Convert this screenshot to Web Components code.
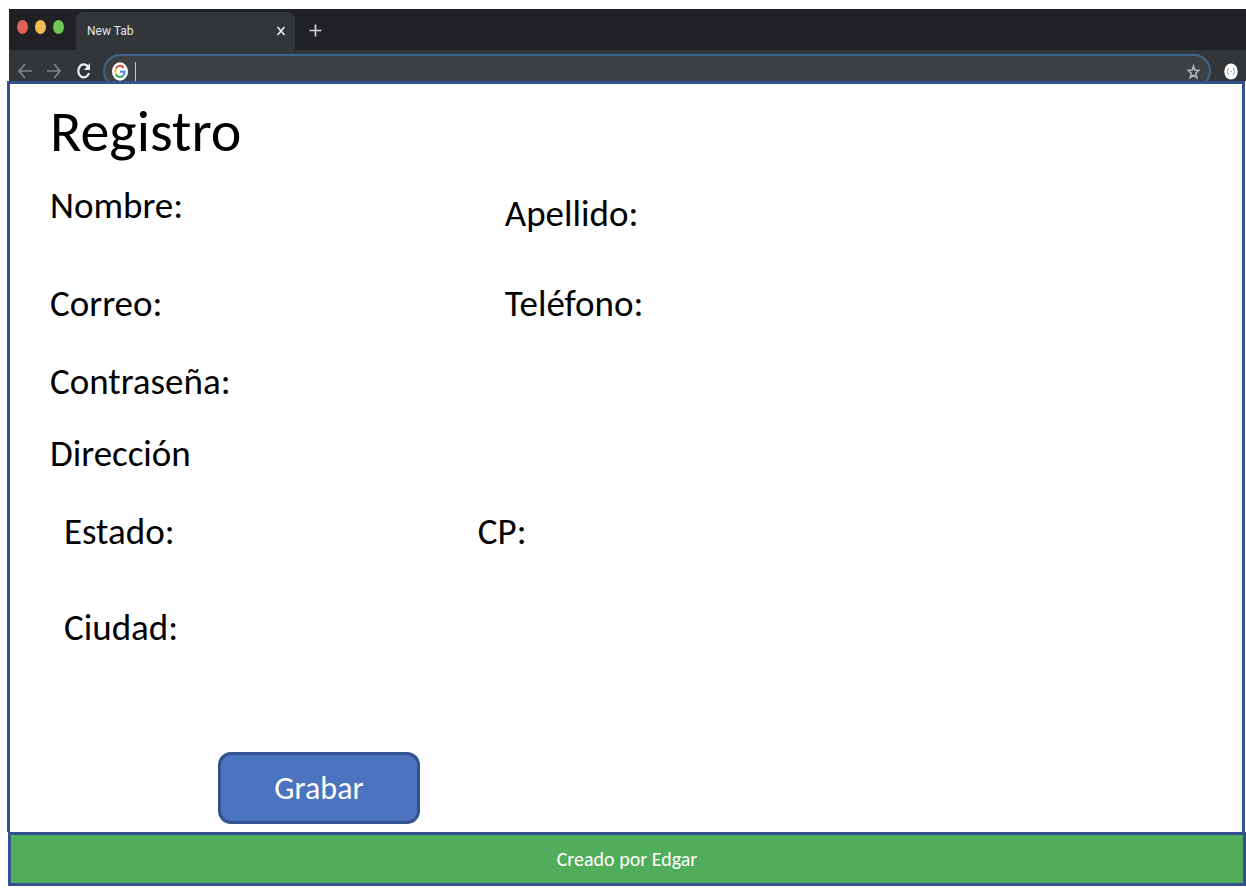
<!DOCTYPE html>
<html lang="es">
<head>
<meta charset="utf-8">
<meta name="viewport" content="width=device-width, initial-scale=1">
<title>Registro</title>
<style>
  body { margin: 0; background: #fff; color: #000; font-family: Carlito, Lato, "Open Sans", sans-serif; }
</style>
</head>
<body>
<app-window>
  <browser-chrome slot="chrome" label="New Tab"></browser-chrome>
  <registration-form></registration-form>
  <page-footer slot="footer">Creado por Edgar</page-footer>
</app-window>

<script>
const define = (name, html, setup) => {
  const template = document.createElement('template');
  template.innerHTML = html;
  customElements.define(name, class extends HTMLElement {
    constructor() {
      super();
      this.attachShadow({ mode: 'open' }).append(template.content.cloneNode(true));
    }
    connectedCallback() { if (setup) setup(this, this.shadowRoot); }
  });
};

define('browser-chrome', `
<style>
  :host { display: block; height: 72px; overflow: hidden; background: #323639; box-sizing: border-box; }
  .tabs { display: flex; align-items: flex-end; height: 41px; background: #202124; }
  .lights { display: flex; gap: 7px; padding: 0 12px 16px 8px; }
  .lights i { width: 11px; height: 14px; border-radius: 50%; background: #e0605a; }
  .lights i:nth-child(2) { background: #efbe50; }
  .lights i:nth-child(3) { background: #72c854; }
  .tab { display: flex; align-items: center; justify-content: space-between; box-sizing: border-box;
         width: 219px; height: 38px; padding: 0 8px 0 11px; border-radius: 8px 8px 0 0; background: #323639;
         color: #e4e6e8; font: 12px/16px Roboto, sans-serif; }
  button { display: flex; padding: 0; border: 0; background: none; color: inherit; }
  svg { display: block; fill: none; stroke: currentColor; }
  .new { margin: 0 0 13px 14px; color: #d4d5d7; }
  .bar { display: flex; align-items: flex-start; padding-top: 4px; color: #808488; }
  .nav { display: flex; gap: 12px; padding: 8px 11px 0 8px; }
  .reload { color: #f0f1f2; }
  .omni { display: flex; flex: 1; min-width: 0; align-items: center; height: 34px; box-sizing: border-box; padding: 0 8px 0 7px;
          border: 2px solid #3d668c; border-radius: 17px; background: #3c4043; color: #b5b8ba; }
  .omni input { flex: 1; min-width: 0; border: 0; border-left: 1px solid #c4c6c8; height: 19px; padding: 0; margin-left: 7px; background: none; outline: 0; color: #fff; }
  .ext { padding: 9px 8px 0 13px; }
</style>
<div class="tabs">
  <div class="lights"><i></i><i></i><i></i></div>
  <div class="tab"><span></span>
    <button aria-label="Cerrar"><svg width="12" height="12" stroke-width="1.7"><path d="M2.500 2l7 8M9.500 2l-7 8"/></svg></button>
  </div>
  <button class="new" aria-label="Nueva"><svg width="13" height="13" stroke-width="1.7"><path d="M6.500 .5v12M.5 6.500h12"/></svg></button>
</div>
<div class="bar">
  <div class="nav">
    <button aria-label="Atrás"><svg width="17" height="18" stroke-width="1.700"><path d="M15 9H2M8 2L2 9l6 7"/></svg></button>
    <button aria-label="Adelante"><svg width="17" height="18" stroke-width="1.700"><path d="M1 9h13M8 2l6 7-6 7"/></svg></button>
    <button class="reload" aria-label="Recargar"><svg width="17" height="18" stroke-width="2.200"><path d="M13.500 5.500A5.500 6.500 0 1 0 14 11"/><path d="M15 1v7H9z" fill="currentColor" stroke="none"/></svg></button>
  </div>
  <div class="omni">
    <svg width="16" height="19" viewBox="0 0 16 19" stroke-width="2"><ellipse cx="8" cy="9.500" rx="8" ry="9.300" fill="#fff" stroke="none"/>
      <path d="M4 6.500A4.600 5.400 0 0 1 11.500 5.800" stroke="#e2483d"/><path d="M4 6.500a5.500 6 0 0 0 0 6" stroke="#f2b91c"/>
      <path d="M4 12.500a4.600 5.400 0 0 0 7.300 .8" stroke="#34a45a"/><path d="M11.300 13.300A5 5 0 0 0 12.600 9.700H8" stroke="#4386ee"/></svg>
    <input type="text" aria-label="Dirección web">
    <svg width="15" height="17" viewBox="0 0 15 17" stroke-width="1.500"><path d="M7.500 3l1.300 4.100 4 .3-3 2.800 1 4.400-3.300-2.400-3.300 2.400 1-4.400-3-2.800 4-.3z"/></svg>
  </div>
  <svg class="ext" width="14" height="17" viewBox="0 0 14 17"><ellipse cx="7" cy="8.500" rx="6.700" ry="8" fill="#fff" stroke="none"/><path d="M4.500 5q-2 3.500 0 7M9.500 5q2 3.500 0 7" stroke="#999"/><path d="M6 8.500h2" stroke="#bbb"/></svg>
</div>`, (host, root) => { root.querySelector('span').textContent = host.getAttribute('label'); });

define('form-field', `
<style>
  :host { display: flex; align-items: center; min-width: 0; height: 40px; font-size: 37px; line-height: 40px; }
  label { flex: none; }
  input { flex: 1; min-width: 0; width: 0; height: 40px; box-sizing: border-box; margin-left: 8px; padding: 0; border: 0; outline: 0; background: none; font: inherit; font-size: 24px; }
</style>
<label for="f"></label><input id="f">`, (host, root) => {
  root.querySelector('label').textContent = host.getAttribute('label');
  root.querySelector('input').type = host.getAttribute('type') || 'text';
});

define('registration-form', `
<style>
  :host { display: block; }
  form { padding: 14px 40px 8px 40px; }
  h1 { margin: 0 0 20px; font-size: 58px; line-height: 68px; font-weight: 400; }
  h2 { margin: 32px 0 38px; font-size: 37px; line-height: 40px; font-weight: 400; }
  .person { display: grid; grid-template-columns: 15fr 23fr; row-gap: 38px; }
  .first { padding-bottom: 20px; }
  .low { padding-top: 8px; }
  .address { display: grid; grid-template-columns: 4fr 7fr; row-gap: 56px; padding-left: 14px; }
  button { display: block; width: 202px; height: 72px; margin: 104px 0 0 168px; padding: 2px 0 0;
           border: 3px solid #32538f; border-radius: 13px; background: #4b73be; color: #fff; font: inherit; font-size: 32px; line-height: 36px; }
</style>
<form onsubmit="return false">
  <h1>Registro</h1>
  <div class="person">
    <form-field class="first" label="Nombre:"></form-field>
    <form-field class="low" label="Apellido:"></form-field>
    <form-field label="Correo:" type="email"></form-field>
    <form-field label="Teléfono:" type="tel"></form-field>
    <form-field label="Contraseña:" type="password"></form-field>
  </div>
  <h2>Dirección</h2>
  <div class="address">
    <form-field label="Estado:"></form-field>
    <form-field label="CP:"></form-field>
    <form-field label="Ciudad:"></form-field>
  </div>
  <button type="submit">Grabar</button>
</form>`);

define('page-footer', `
<style>
  :host { display: block; box-sizing: border-box; border: 3px solid #32538f; background: #50ad5b; color: #fff;
          padding: 12px; text-align: center; font-size: 20px; line-height: 24px; }
  footer { display: block; }
</style>
<footer><slot></slot></footer>`);

define('app-window', `
<style>
  :host { display: flex; flex-direction: column; box-sizing: border-box; min-height: 100vh; padding: 9px 0 8px 7px; }
  .top { padding-left: 2px; }
  main { flex: 1; box-sizing: border-box; border: 3px solid #32538f; border-bottom: 0; margin-right: 1px; }
  .foot { padding-left: 1px; }
</style>
<div class="top"><slot name="chrome"></slot></div>
<main><slot></slot></main>
<div class="foot"><slot name="footer"></slot></div>`);
</script>
</body>
</html>
